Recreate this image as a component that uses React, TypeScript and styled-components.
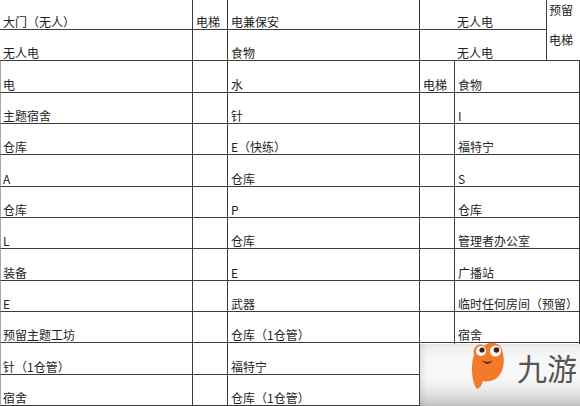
import React from "react";
import styled, { createGlobalStyle } from "styled-components";

const Global = createGlobalStyle`
  html, body { margin: 0; padding: 0; background: #fff; }
  body { font-family: "Noto Sans CJK SC", "Noto Sans", sans-serif; }
`;

const LINE = "#3c3c3c";

const Sheet = styled.div`
  position: relative;
  width: 580px;
  height: 406px;
  overflow: hidden;
  display: grid;
  grid-template-columns: 193px 35px 192px 35px 92px 33px;
  grid-template-rows: 30px 31px 32px 31px 31px 32px 31px 31px 32px 31px 31px 32px 31px;
  background: #fff;
`;

const Cell = styled.div<{
  $row: number;
  $col: number;
  $colSpan?: number;
  $rowSpan?: number;
  $pad?: number;
  $noRight?: boolean;
  $left?: boolean;
}>`
  grid-row: ${(p) => p.$row} / span ${(p) => p.$rowSpan ?? 1};
  grid-column: ${(p) => p.$col} / span ${(p) => p.$colSpan ?? 1};
  box-sizing: border-box;
  border-right: ${(p) => (p.$noRight ? "none" : `1px solid ${LINE}`)};
  border-bottom: 1px solid ${LINE};
  border-left: ${(p) => (p.$left ? "1px solid #a8a8a8" : "none")};
  display: flex;
  align-items: flex-end;
  padding: 0 0 0 ${(p) => p.$pad ?? 3}px;
  font-size: 12px;
  line-height: 14px;
  color: #1e1e1e;
  white-space: nowrap;
  overflow: hidden;
`;

const StackCell = styled(Cell)`
  flex-direction: column;
  align-items: flex-start;
  justify-content: flex-start;
  padding-top: 4px;
  gap: 18px;
  line-height: 12px;
`;

const Watermark = styled.div`
  position: absolute;
  left: 420px;
  top: 344px;
  width: 160px;
  height: 62px;
  background: linear-gradient(
    to bottom,
    #ececec 0%,
    #f6f6f6 20%,
    #f8f8f8 55%,
    #e6e6e6 78%,
    #c4c4c4 100%
  );
  box-shadow: inset 4px 0 6px -2px rgba(0, 0, 0, 0.12);
`;

const Mascot = styled.svg`
  position: absolute;
  left: 50px;
  top: -3px;
`;

const Brand = styled.div`
  position: absolute;
  left: 97px;
  top: 3px;
  font-family: "Noto Sans CJK SC", sans-serif;
  font-size: 30px;
  line-height: 40px;
  font-weight: 400;
  color: #555;
  letter-spacing: 0px;
`;

const col1 = ["电", "主题宿舍", "仓库", "A", "仓库", "L", "装备", "E", "预留主题工坊", "针（1仓管）", "宿舍"];
const col3 = ["水", "针", "E（快练）", "仓库", "P", "仓库", "E", "武器", "仓库（1仓管）", "福特宁", "仓库（1仓管）"];
const col5 = ["食物", "I", "福特宁", "S", "仓库", "管理者办公室", "广播站", "临时任何房间（预留）", "宿舍", "", ""];

export default function App() {
  return (
    <>
      <Global />
      <Sheet>
        <Cell $row={1} $col={1}>大门（无人）</Cell>
        <Cell $row={1} $col={2}>电梯</Cell>
        <Cell $row={1} $col={3}>电兼保安</Cell>
        <Cell $row={1} $col={4} $colSpan={2} $pad={37}>无人电</Cell>
        <StackCell $row={1} $col={6} $rowSpan={2} $noRight $pad={2}>
          <span>预留</span>
          <span>电梯</span>
        </StackCell>

        <Cell $row={2} $col={1}>无人电</Cell>
        <Cell $row={2} $col={2}></Cell>
        <Cell $row={2} $col={3}>食物</Cell>
        <Cell $row={2} $col={4} $colSpan={2} $pad={37}>无人电</Cell>

        {col1.map((t, i) => (
          <React.Fragment key={i}>
            <Cell $row={i + 3} $col={1} $left $pad={2}>{t}</Cell>
            <Cell $row={i + 3} $col={2}></Cell>
            <Cell $row={i + 3} $col={3}>{col3[i]}</Cell>
            <Cell $row={i + 3} $col={4}>{i === 0 ? "电梯" : ""}</Cell>
            <Cell $row={i + 3} $col={5} $colSpan={2}>{col5[i]}</Cell>
          </React.Fragment>
        ))}

        <Watermark>
          <Mascot width="36" height="50" viewBox="0 0 36 50">
            <path
              d="M4 14 C2 6 9 1 14 5 C18 0 30 0 32 9 C35 17 35 30 27 37 C23 40 17 41 13 40 C12 44 10 47 7 48 C3 43 2 35 2 27 C2 21 3 17 4 14 Z"
              fill="#f47a2b"
            />
            <circle cx="11" cy="10" r="5" fill="#fff" />
            <circle cx="25.5" cy="10" r="5.5" fill="#fff" />
            <circle cx="12" cy="9" r="2.6" fill="#3b2418" />
            <circle cx="26.5" cy="9" r="2.8" fill="#3b2418" />
            <path d="M11.5 19 Q17.5 26 23 19.5 Q17.5 22.5 11.5 19 Z" fill="#3b2418" />
          </Mascot>
          <Brand>九游</Brand>
        </Watermark>
      </Sheet>
    </>
  );
}
